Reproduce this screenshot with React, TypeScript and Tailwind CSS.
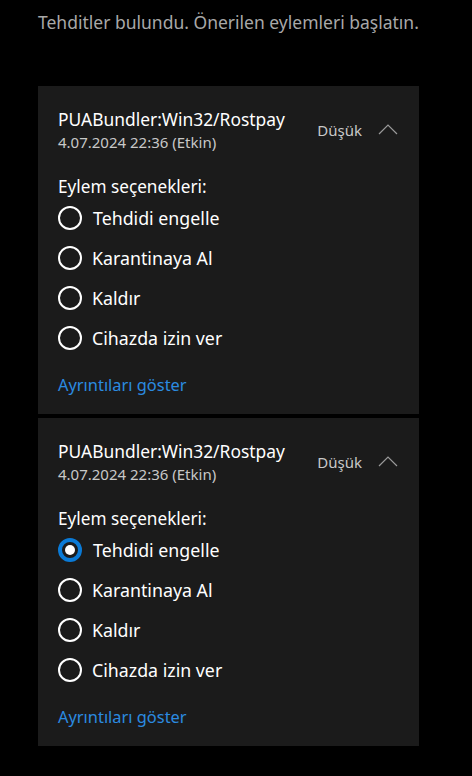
const options = ["Tehdidi engelle", "Karantinaya Al", "Kaldır", "Cihazda izin ver"];

function Radio({ checked }: { checked: boolean }) {
  if (checked) {
    return (
      <span className="w-6 h-6 rounded-full border-4 border-[#0a7ad6] flex items-center justify-center shrink-0">
        <span className="w-2.5 h-2.5 rounded-full bg-white" />
      </span>
    );
  }
  return <span className="w-6 h-6 rounded-full border-2 border-white shrink-0" />;
}

function ThreatCard({ selected }: { selected: number | null }) {
  return (
    <div className="bg-[#1b1b1b] h-[328px] pl-5 pr-5 pt-[20px]">
      <div className="flex items-start">
        <div className="flex-1">
          <div className="text-[17.4px] leading-[26px] text-white">PUABundler:Win32/Rostpay</div>
          <div className="text-[15px] leading-[20px] text-[#c8c8c8]">4.07.2024 22:36 (Etkin)</div>
        </div>
        <div className="flex items-center mt-[14px]">
          <span className="text-[15px] leading-[20px] text-[#c8c8c8]">Düşük</span>
          <svg width="20" height="12" viewBox="0 0 20 12" className="ml-[16px] mr-[1px] -mt-[3px]">
            <path d="M1 11 L10 2 L19 11" stroke="#9a9a9a" strokeWidth="1.2" fill="none" />
          </svg>
        </div>
      </div>
      <div className="text-[17.2px] leading-[24px] text-white mt-[23px]">Eylem seçenekleri:</div>
      <div className="flex flex-col -mt-[1px]">
        {options.map((o, i) => (
          <div key={o} className="flex items-center h-10">
            <Radio checked={selected === i} />
            <span className={`text-[17.8px] text-white ${i === 0 ? "ml-[11px]" : "ml-[10px]"}`}>{o}</span>
          </div>
        ))}
      </div>
      <div className="text-[16.4px] leading-[24px] text-[#2b8be0] mt-[15px]">Ayrıntıları göster</div>
    </div>
  );
}

export default function App() {
  return (
    <div
      className="min-h-screen bg-black w-[472px] h-[776px] overflow-hidden"
      style={{ fontFamily: '"Noto Sans", "Open Sans", sans-serif' }}
    >
      <div className="px-[38px] pt-[8px]">
        <p className="text-[17.5px] leading-[28px] text-[#a8a8a8] whitespace-nowrap">Tehditler bulundu. Önerilen eylemleri başlatın.</p>
        <div className="mt-[50px] flex flex-col gap-1 w-[381px]">
          <ThreatCard selected={null} />
          <ThreatCard selected={0} />
        </div>
      </div>
    </div>
  );
}
